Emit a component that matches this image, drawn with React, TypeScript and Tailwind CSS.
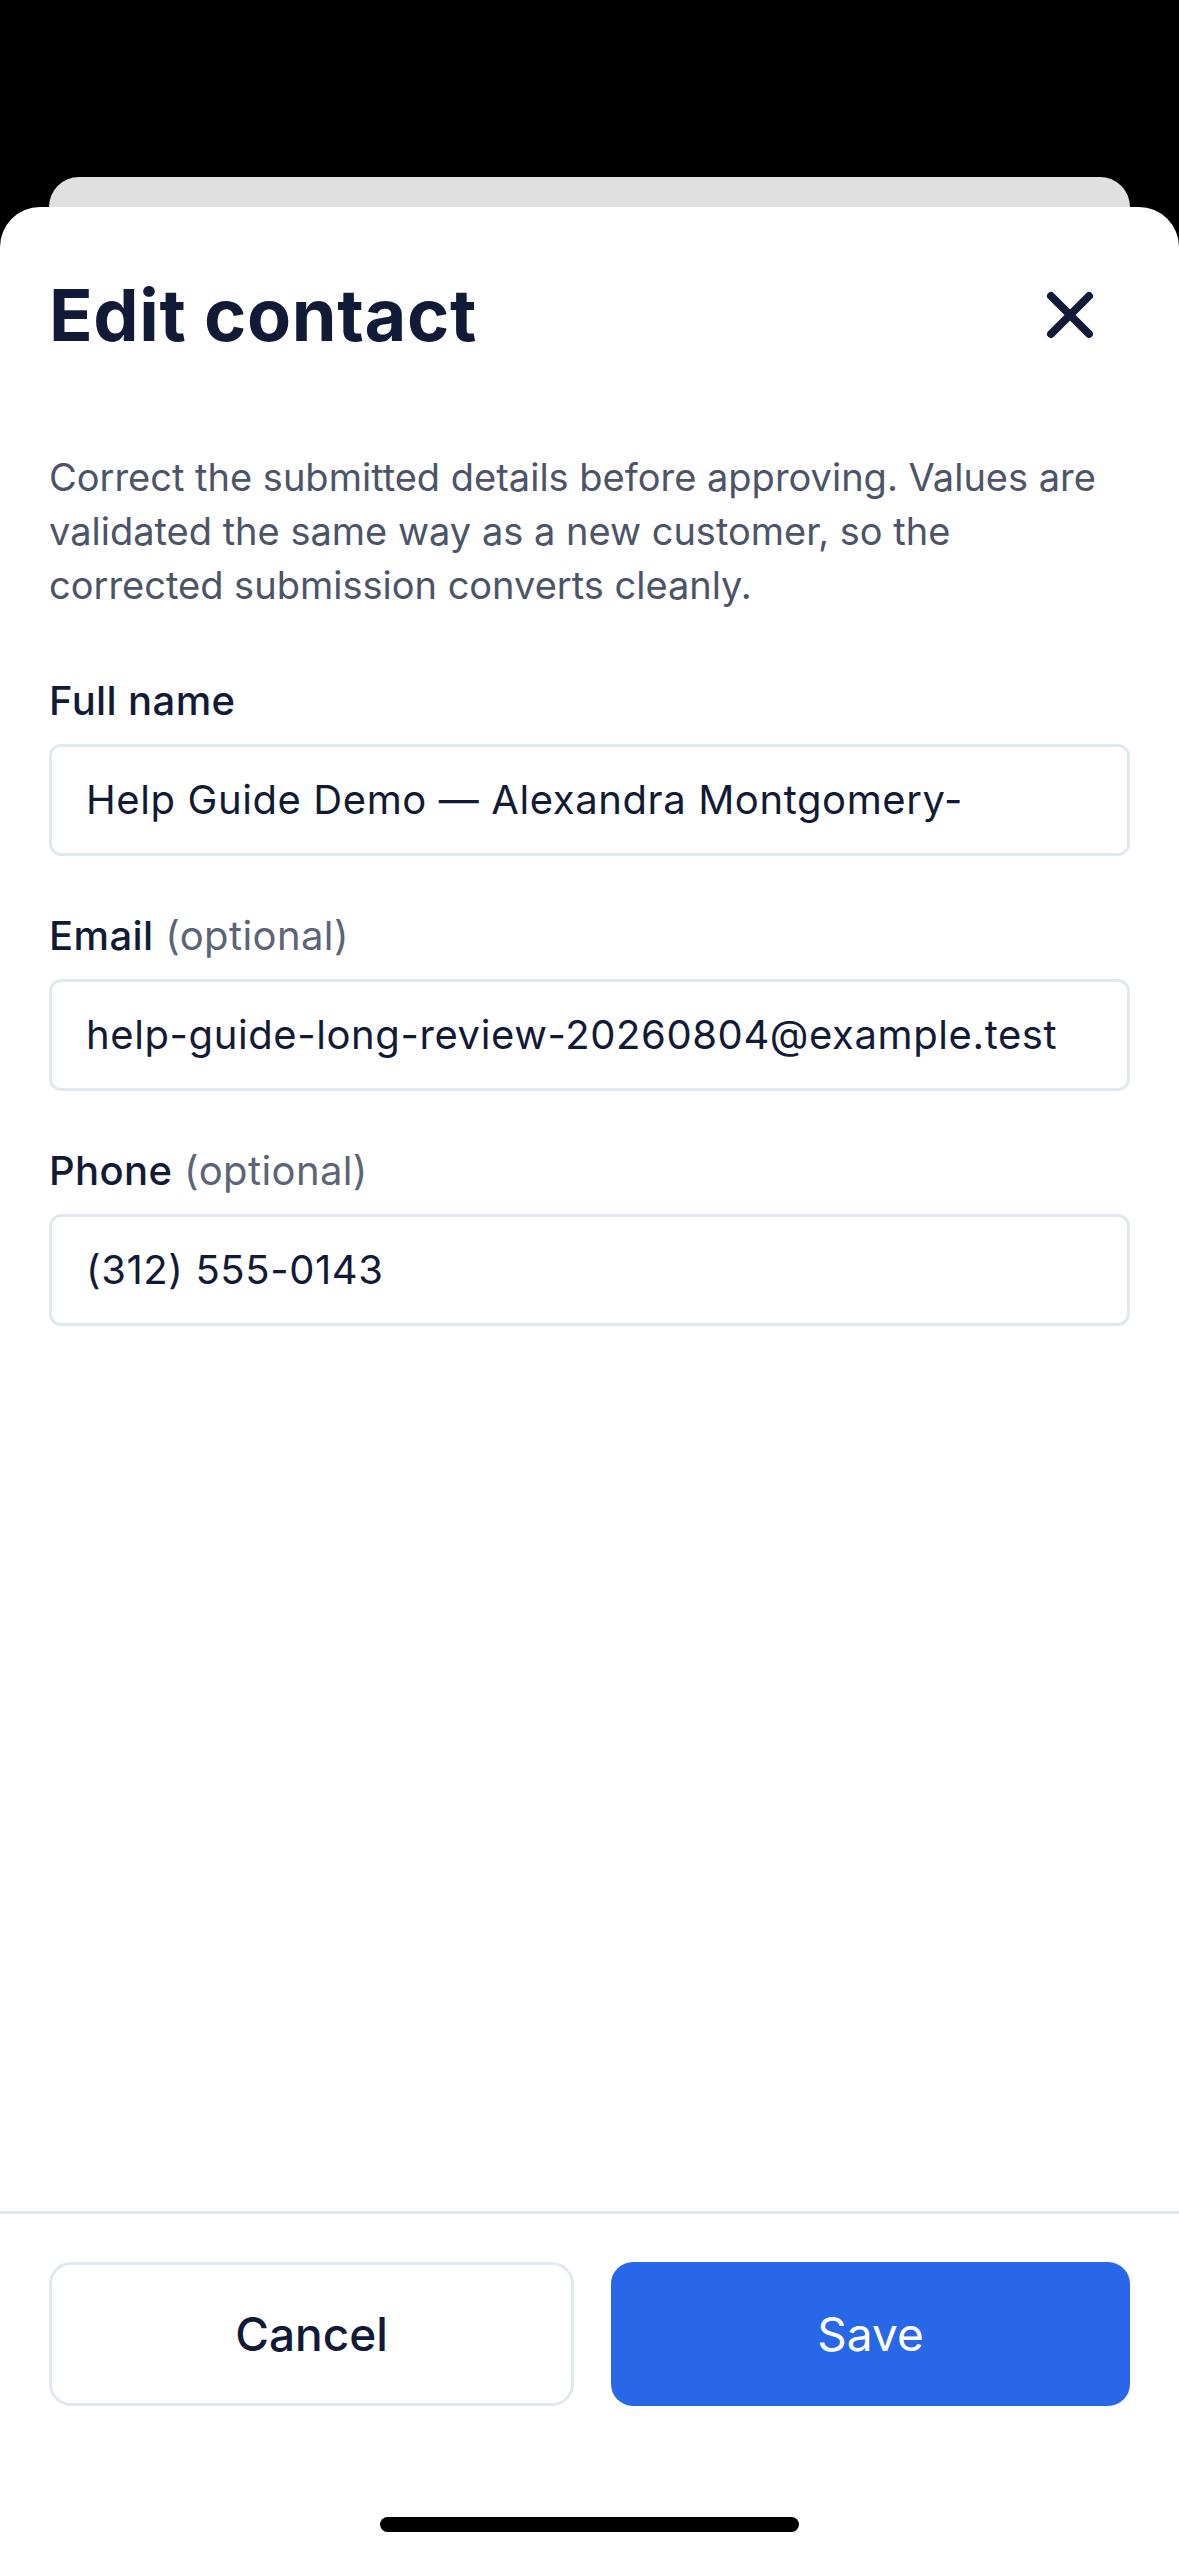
import React, { useState } from 'react';
import { X } from 'lucide-react';

type FieldProps = {
  label: string;
  optional?: boolean;
  value: string;
  onChange: (v: string) => void;
};

function Field({ label, optional, value, onChange }: FieldProps) {
  return (
    <div className="flex flex-col">
      <label className="text-[40px] leading-[46px] font-medium tracking-[0.4px] text-[#111a37] mb-[20px]">
        {label}
        {optional && <span className="font-normal text-[#5b6478]"> (optional)</span>}
      </label>
      <div className="h-[112px] rounded-[12px] border-[3px] border-[#e2e8f0] bg-white flex items-center px-[34px] overflow-hidden">
        <input
          value={value}
          onChange={(e) => onChange(e.target.value)}
          className="w-full bg-transparent outline-none text-[40px] tracking-[0.6px] text-[#111a37]"
        />
      </div>
    </div>
  );
}

export default function App() {
  const [name, setName] = useState('Help Guide Demo — Alexandra Montgomery-');
  const [email, setEmail] = useState('help-guide-long-review-20260804@example.test');
  const [phone, setPhone] = useState('(312) 555-0143');

  return (
    <div
      className="w-[1179px] h-[2556px] bg-black flex flex-col overflow-hidden"
      style={{ fontFamily: 'Inter, "Noto Sans", sans-serif' }}
    >
      {/* card behind the sheet */}
      <div className="mt-[177px] mx-[49px] h-[30px] rounded-t-[30px] bg-[#e0e0e0] shrink-0" />

      {/* Sheet */}
      <div className="flex-1 bg-white rounded-t-[40px] flex flex-col">
        <div className="flex-1 flex flex-col">
          {/* Header */}
          <div className="flex items-center justify-between pl-[49px] pr-[71px] pt-[66px]">
            <h1 className="text-[72px] leading-[84px] font-bold text-[#111a37] tracking-[0.6px]">
              Edit contact
            </h1>
            <button className="w-[76px] h-[76px] flex items-center justify-center text-[#111a37]">
              <X size={76} strokeWidth={2.5} />
            </button>
          </div>

          <div className="px-[49px] pt-[93px] flex flex-col">
            <p className="text-[38px] leading-[54px] text-[#4b5468] mb-[66px]">
              Correct the submitted details before approving. Values are validated the same way as
              a new customer, so the corrected submission converts cleanly.
            </p>

            <div className="flex flex-col gap-[57px]">
              <Field label="Full name" value={name} onChange={setName} />
              <Field label="Email" optional value={email} onChange={setEmail} />
              <Field label="Phone" optional value={phone} onChange={setPhone} />
            </div>
          </div>
        </div>

        {/* Footer */}
        <div className="border-t-[3px] border-[#e2e8f0] pt-[48px]">
          <div className="flex gap-[37px] px-[49px]">
            <button className="flex-1 h-[144px] rounded-[22px] border-[3px] border-[#e2e8f0] bg-white text-[46px] font-medium text-[#111a37]">
              Cancel
            </button>
            <button className="flex-1 h-[144px] rounded-[22px] bg-[#2767e8] text-[46px] text-white">
              Save
            </button>
          </div>
          <div className="flex justify-center pt-[111px] pb-[24px]">
            <div className="w-[419px] h-[15px] rounded-full bg-black" />
          </div>
        </div>
      </div>
    </div>
  );
}
